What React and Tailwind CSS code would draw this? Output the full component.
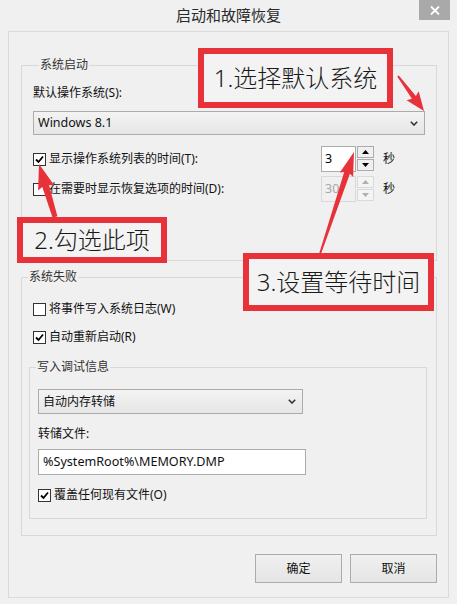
import React from 'react'

const RED = '#e8323a'

// tapered arrow polygon from tail to tip
const arrowPoints = (tail, tip, w0, w1, headW, headL) => {
  const dx = tip[0] - tail[0]
  const dy = tip[1] - tail[1]
  const len = Math.hypot(dx, dy)
  const ux = dx / len
  const uy = dy / len
  const nx = -uy
  const ny = ux
  const bx = tip[0] - ux * headL
  const by = tip[1] - uy * headL
  const pts = [
    [tail[0] + nx * w0 / 2, tail[1] + ny * w0 / 2],
    [bx + nx * w1 / 2, by + ny * w1 / 2],
    [bx + nx * headW / 2 - ux * 2, by + ny * headW / 2 - uy * 2],
    tip,
    [bx - nx * headW / 2 - ux * 2, by - ny * headW / 2 - uy * 2],
    [bx - nx * w1 / 2, by - ny * w1 / 2],
    [tail[0] - nx * w0 / 2, tail[1] - ny * w0 / 2],
  ]
  return pts.map((p) => p[0].toFixed(1) + ',' + p[1].toFixed(1)).join(' ')
}

const Checkbox = ({ checked }) => (
  <span className="flex h-[13px] w-[13px] shrink-0 items-center justify-center border border-[#333333] bg-white">
    {checked && (
      <svg width="9" height="9" viewBox="0 0 9 9">
        <path d="M1 4.5 L3.5 7 L8 1.5" fill="none" stroke="#000" strokeWidth="1.8" />
      </svg>
    )}
  </span>
)

const Chevron = () => (
  <svg width="8" height="5" viewBox="0 0 8 5">
    <path d="M0.8 0.8 L4 4 L7.2 0.8" fill="none" stroke="#333" strokeWidth="1.6" />
  </svg>
)

const Spinner = ({ value, disabled }) => (
  <div className="flex items-start">
    <div
      className={
        disabled
          ? 'flex h-[26px] w-[35px] items-center border border-[#d9d9d9] bg-[#f0f0f0] pl-[3px] text-[12.5px] text-[#a8a8a8]'
          : 'flex h-[26px] w-[35px] items-center border border-[#acacac] bg-white pl-[3px] text-[12.5px] text-black'
      }
    >
      {value}
    </div>
    <div className="ml-[1px] flex flex-col gap-[1px]">
      {['up', 'down'].map((d) => (
        <div
          key={d}
          className={
            disabled
              ? 'flex h-[12px] w-[17px] items-center justify-center border border-[#dadada] bg-[#f4f4f4]'
              : 'flex h-[12px] w-[17px] items-center justify-center border border-[#acacac] bg-[#f0f0f0]'
          }
        >
          <svg width="7" height="4" viewBox="0 0 7 4">
            <path d={d === 'up' ? 'M0 4 L3.5 0 L7 4 Z' : 'M0 0 L3.5 4 L7 0 Z'} fill={disabled ? '#b0b0b0' : '#000'} />
          </svg>
        </div>
      ))}
    </div>
    <span className="ml-[9px] leading-[26px]">秒</span>
  </div>
)

const GroupLabel = ({ children, className }) => (
  <span className={'-mt-[8px] block w-fit bg-[#f0f0f0] px-[1px] leading-[14px] text-[#333] ' + className}>{children}</span>
)

const CheckRow = ({ checked, children }) => (
  <div className="flex h-[20px] items-center">
    <Checkbox checked={checked} />
    <span className="ml-[3px]">{children}</span>
  </div>
)

export default function App() {
  return (
    <div className="relative h-[604px] w-[457px] overflow-hidden bg-[#f0f0f0] font-['Noto_Sans','Noto_Sans_CJK_SC',sans-serif] text-[12px] text-[#111]">
      {/* title bar */}
      <div className="grid h-[31px] grid-cols-[1fr_auto_1fr] items-start">
        <div />
        <div className="text-[15px] leading-[30px] text-[#2a2a2a]">启动和故障恢复</div>
        <div className="mr-[7px] flex h-[20px] w-[31px] items-center justify-center justify-self-end bg-[#a9a9a9]">
          <svg width="10" height="9" viewBox="0 0 10 9">
            <path d="M1 0.5 L9 8.5 M9 0.5 L1 8.5" stroke="#fff" strokeWidth="1.8" />
          </svg>
        </div>
      </div>

      {/* client panel */}
      <div className="ml-[8px] h-[567px] w-[441px] border border-[#dadada] pl-[12px] pr-[11px] pt-[33px]">
        {/* 系统启动 */}
        <div className="border border-[#d8d8d8] px-[11px] pb-[58px]">
          <GroupLabel className="ml-[6px]">系统启动</GroupLabel>
          <div className="mt-[14px] leading-[14px]">默认操作系统(S):</div>
          <div className="mt-[11px] flex h-[24px] items-center justify-between border border-[#acacac] bg-gradient-to-b from-[#f3f3f3] to-[#e6e6e6] pl-[4px] pr-[6px]">
            <span className="text-[12.5px]">Windows 8.1</span>
            <Chevron />
          </div>
          <div className="mt-[11px] flex h-[26px] items-center">
            <div className="flex w-[288px] items-center">
              <Checkbox checked />
              <span className="ml-[3px]">显示操作系统列表的时间(T):</span>
            </div>
            <Spinner value="3" />
          </div>
          <div className="mt-[4px] flex h-[26px] items-center">
            <div className="flex w-[288px] items-center">
              <Checkbox />
              <span className="ml-[3px]">在需要时显示恢复选项的时间(D):</span>
            </div>
            <Spinner value="30" disabled />
          </div>
        </div>

        {/* 系统失败 */}
        <div className="mt-[16px] border border-[#d8d8d8] pb-[16px]">
          <GroupLabel className="ml-[6px]">系统失败</GroupLabel>
          <div className="ml-[11px] mt-[15px]">
            <CheckRow>将事件写入系统日志(W)</CheckRow>
          </div>
          <div className="ml-[11px] mt-[8px]">
            <CheckRow checked>自动重新启动(R)</CheckRow>
          </div>

          <div className="ml-[7px] mr-[9px] mt-[20px] border border-[#d8d8d8] pb-[13px] pl-[8px]">
            <GroupLabel className="-ml-[2px]">写入调试信息</GroupLabel>
            <div className="mt-[15px] flex h-[25px] w-[265px] items-center justify-between border border-[#acacac] bg-gradient-to-b from-[#f3f3f3] to-[#e6e6e6] pl-[4px] pr-[6px]">
              <span>自动内存转储</span>
              <Chevron />
            </div>
            <div className="mt-[13px] leading-[14px]">转储文件:</div>
            <div className="mt-[8px] flex h-[26px] w-[268px] items-center border border-[#acacac] bg-white pl-[4px] text-[12.6px]">
              {'%SystemRoot%\\MEMORY.DMP'}
            </div>
            <div className="mt-[10px]">
              <CheckRow checked>覆盖任何现有文件(O)</CheckRow>
            </div>
          </div>
        </div>

        {/* buttons */}
        <div className="mt-[18px] flex justify-end gap-[8px]">
          <button className="h-[29px] w-[87px] border border-[#acacac] bg-gradient-to-b from-[#f0f0f0] to-[#e5e5e5] text-[12px]">确定</button>
          <button className="h-[29px] w-[87px] border border-[#acacac] bg-gradient-to-b from-[#f0f0f0] to-[#e5e5e5] text-[12px]">取消</button>
        </div>
      </div>

      {/* annotations */}
      <div className="absolute left-[198px] top-[48px] flex h-[60px] w-[195px] items-center justify-center border-[6px] border-[#e8323a] bg-[#f3f3f3] text-[24px] font-light text-[#1a1a1a]">
        1.选择默认系统
      </div>
      <div className="absolute left-[17px] top-[217px] flex h-[46px] w-[150px] items-center justify-center border-[6px] border-[#e8323a] bg-[#f3f3f3] text-[24px] font-light text-[#1a1a1a]">
        2.勾选此项
      </div>
      <div className="absolute left-[243px] top-[253px] flex h-[58px] w-[191px] items-center justify-center border-[6px] border-[#e8323a] bg-[#f3f3f3] text-[24px] font-light text-[#1a1a1a]">
        3.设置等待时间
      </div>

      <svg className="pointer-events-none absolute left-0 top-0" width="457" height="604">
        <polygon points={arrowPoints([398, 76], [424, 111], 2, 5, 15, 17)} fill={RED} />
        <polygon points={arrowPoints([55, 217], [39, 164], 5, 7, 17, 23)} fill={RED} />
        <polygon points={arrowPoints([320, 254], [354, 152], 2, 6, 14, 22)} fill={RED} />
      </svg>
    </div>
  )
}
